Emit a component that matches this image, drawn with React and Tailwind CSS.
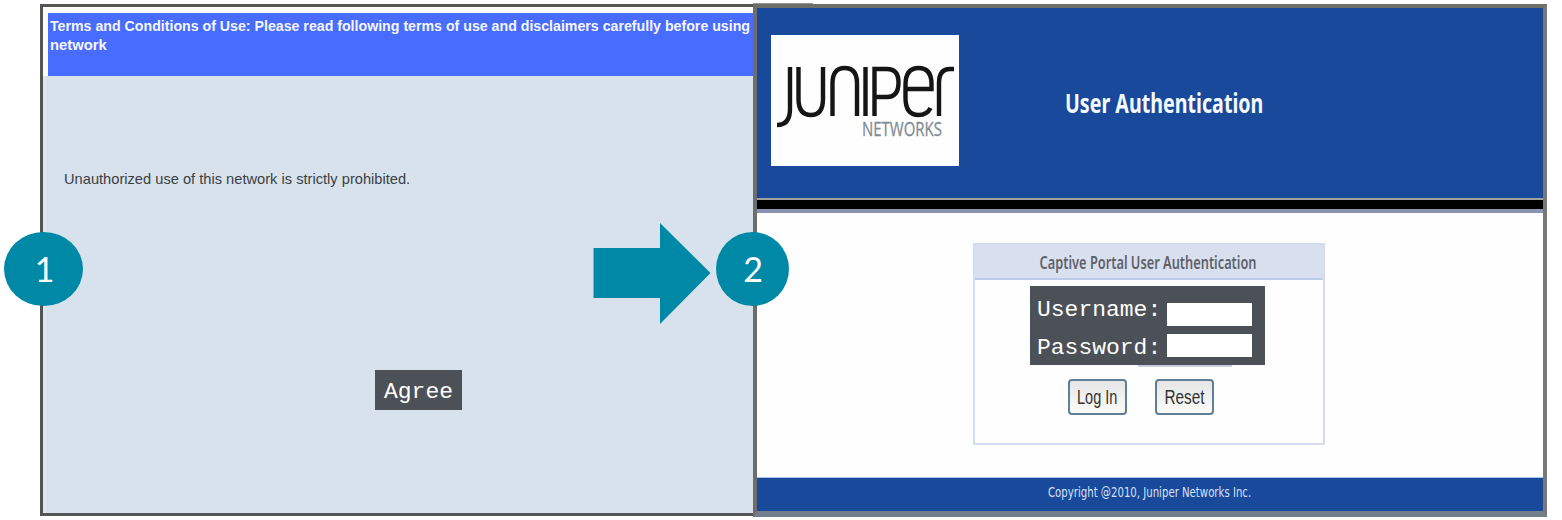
function JuniperLogo() {
  return (
    <svg viewBox="0 0 188 131" className="block h-[131px] w-[188px] bg-[#fefefe]">
      <g fill="none" stroke="#151515" strokeWidth="4.4">
        <path d="M19 32V74Q19 90 6 90" />
        <path d="M27.500 32V64Q27.500 80 40 80Q52 80 52 64V32" />
        <path d="M61.500 81V48Q61.500 33 73.500 33Q86 33 86 48V81" />
        <path d="M94.500 32V81" />
        <path d="M103.500 81V34H116Q127.500 34 127.500 47.500Q127.500 62 116 62H104" />
        <path d="M134 54H160.500V49Q160.500 33 147.500 33Q134.500 33 134.500 50V63Q134.500 80 147.500 80Q156 80 159.500 73" />
        <path d="M168 81V48Q168 34 179 34H183" />
      </g>
      <text x="91" y="100.500" textLength="80" lengthAdjust="spacingAndGlyphs" fontFamily="Open Sans, sans-serif" fontSize="19.500" fill="#7f8c95" stroke="#7f8c95" strokeWidth="0.3">NETWORKS</text>
    </svg>
  );
}

function FieldLabel({ children }) {
  return (
    <span className="scale-y-[0.95] whitespace-pre font-['Liberation_Mono',monospace] text-[23px] leading-[38px] text-white">{children}</span>
  );
}

function PushButton({ children }) {
  return (
    <div className="flex h-[36px] w-[59px] items-center justify-center rounded-[4px] border-2 border-[#5f7f99] bg-linear-to-b from-[#e6e6e6] to-[#fbfbf8] pb-[2px] font-['Liberation_Sans',sans-serif] text-[21px] leading-none text-[#333]">
      {children}
    </div>
  );
}

export default function App() {
  return (
    <main className="relative flex h-[520px] w-[1562px] overflow-hidden bg-white pt-[4px] pl-[40px]">
      <section className="flex h-[512px] w-[713px] flex-col border-t-[3px] border-b-[3px] border-l-[3px] border-[#555553] bg-[#d8e2ec]">
        <header className="bg-[#fbfbf8] pt-[6px] pl-[5px]">
          <div className="h-[63px] bg-[#486cfe] pt-[3px] pl-[2px] font-['Liberation_Sans',sans-serif] text-[15px] leading-[19px] font-bold text-[#f4f6ff]">
            <div className="w-[699px] origin-left scale-x-[0.945] whitespace-nowrap">Terms and Conditions of Use: Please read following terms of use and disclaimers carefully before using</div>
            <div className="w-[60px] origin-left scale-x-[0.985] whitespace-nowrap">network</div>
          </div>
        </header>
        <div className="flex flex-1 flex-col border-l-[3px] border-[#e3e4ec]">
          <p className="mt-[93px] ml-[18px] origin-left scale-x-[0.977] font-['Liberation_Sans',sans-serif] text-[15px] leading-[20px] whitespace-nowrap text-[#3b3f44]">Unauthorized use of this network is strictly prohibited.</p>
          <div className="mt-[181px] ml-[329px] flex h-[40px] w-[87px] items-center justify-center bg-[#4c5157] pt-[4px] font-['Liberation_Mono',monospace] text-[23px] text-white"><span className="scale-y-[0.95]">Agree</span></div>
        </div>
      </section>

      <section className="flex h-[513px] w-[794px] flex-col border-t-4 border-r-4 border-b-[6px] border-l-4 border-t-[#6d6e66] border-r-[#777977] border-b-[#737f8c] border-l-[#6d6e6c] bg-[#fefefe]">
        <header className="flex h-[190px] shrink-0 bg-[#19499b] pt-[27px] pl-[14px]">
          <JuniperLogo />
          <h1 className="mt-[48px] ml-[106px] h-[40px] origin-left scale-x-[0.728] font-['Noto_Sans',sans-serif] text-[27px] leading-[40px] font-bold whitespace-nowrap text-[#f5faff]">User Authentication</h1>
        </header>
        <div className="h-[15px] shrink-0 border-t-2 border-b-[4px] border-t-[#a0a2a0] border-b-[#8b91b1] bg-black" />
        <div className="flex flex-1 justify-start border-b border-[#a9c4ee] pt-[30px] pl-[216px]">
          <div className="flex h-[202px] w-[352px] flex-col border-2 border-[#d3dcf0]">
            <div className="flex h-[35px] items-center justify-center border-b-2 border-[#bccdea] bg-[#d8e0f0] pt-[2px] pr-[2px]">
              <span className="scale-x-[0.753] font-['Noto_Sans',sans-serif] text-[17px] leading-none font-semibold whitespace-nowrap text-[#5f6268]">Captive Portal User Authentication</span>
            </div>
            <div className="mt-[6px] ml-[55px] flex h-[79px] w-[235px] bg-[#4c5157] pl-[7px]">
              <div className="flex w-[130px] flex-col pt-[5px]">
                <FieldLabel>Username:</FieldLabel>
                <FieldLabel>Password:</FieldLabel>
              </div>
              <div className="flex flex-col gap-[8px] pt-[17px]">
                <span className="h-[23px] w-[85px] bg-white" />
                <span className="h-[23px] w-[85px] bg-white" />
              </div>
            </div>
            <div className="ml-[163px] h-[2px] w-[94px] bg-[#c5cedf]" />
            <div className="mt-[12px] ml-[93px] flex gap-[28px]">
              <PushButton><span className="scale-x-[0.69] whitespace-nowrap">Log In</span></PushButton>
              <PushButton><span className="scale-x-[0.73] whitespace-nowrap">Reset</span></PushButton>
            </div>
          </div>
        </div>
        <footer className="h-[33px] shrink-0 bg-[#19499b] pl-[291px]">
          <span className="block origin-left scale-x-[0.806] font-['DejaVu_Sans_Condensed','DejaVu_Sans',sans-serif] text-[14px] leading-[28px] whitespace-nowrap text-[#d5e2fa]">Copyright @2010, Juniper Networks Inc.</span>
        </footer>
      </section>

      <div className="absolute top-[3px] left-[753px] h-px w-[60px] bg-[#969696]" />
      <svg viewBox="0 0 118 102" className="absolute top-[222px] left-[593px] h-[102px] w-[118px]">
        <path d="M.500 26H67V1L117.500 51L67 102V76H.500Z" fill="#0088a7" />
      </svg>
      <div className="absolute top-[232px] left-[4px] flex h-[74px] w-[79px] items-center justify-center rounded-[50%] bg-[#0088a7] pb-[2px] pl-[2px] font-['Lato',sans-serif] text-[34px] text-white">1</div>
      <div className="absolute top-[232px] left-[716px] flex h-[74px] w-[73px] items-center justify-center rounded-[50%] bg-[#0088a7] pb-[2px] pl-px font-['Lato',sans-serif] text-[34px] text-white">2</div>
    </main>
  );
}
